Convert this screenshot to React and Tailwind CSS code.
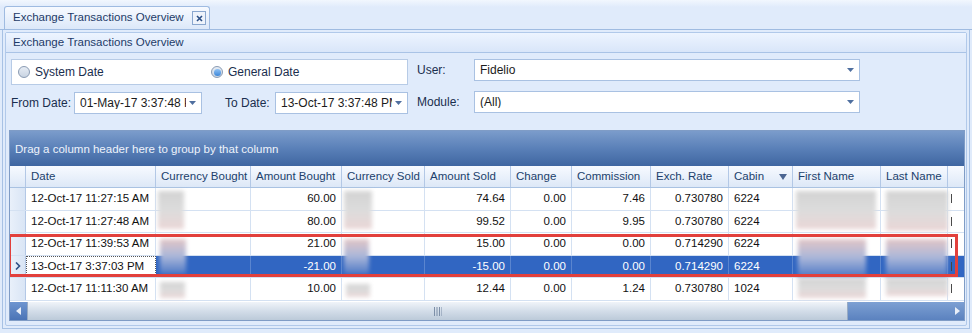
import { useState } from "react";

const columns = [
  { key: "date", label: "Date", w: 130, align: "left" },
  { key: "cb", label: "Currency Bought", w: 95, align: "left" },
  { key: "ab", label: "Amount Bought", w: 91, align: "right" },
  { key: "cs", label: "Currency Sold", w: 83, align: "left" },
  { key: "as", label: "Amount Sold", w: 86, align: "right" },
  { key: "change", label: "Change", w: 61, align: "right" },
  { key: "comm", label: "Commission", w: 79, align: "right" },
  { key: "rate", label: "Exch. Rate", w: 78, align: "right" },
  { key: "cabin", label: "Cabin", w: 64, align: "left", filter: true },
  { key: "first", label: "First Name", w: 88, align: "left" },
  { key: "last", label: "Last Name", w: 67, align: "left" },
  { key: "more", label: "I", w: 40, align: "left" },
];

const rows = [
  { date: "12-Oct-17 11:27:15 AM", ab: "60.00", as: "74.64", change: "0.00", comm: "7.46", rate: "0.730780", cabin: "6224" },
  { date: "12-Oct-17 11:27:48 AM", ab: "80.00", as: "99.52", change: "0.00", comm: "9.95", rate: "0.730780", cabin: "6224" },
  { date: "12-Oct-17 11:39:53 AM", ab: "21.00", as: "15.00", change: "0.00", comm: "0.00", rate: "0.714290", cabin: "6224" },
  { date: "13-Oct-17 3:37:03 PM", ab: "-21.00", as: "-15.00", change: "0.00", comm: "0.00", rate: "0.714290", cabin: "6224" },
  { date: "12-Oct-17 11:11:30 AM", ab: "10.00", as: "12.44", change: "0.00", comm: "1.24", rate: "0.730780", cabin: "1024" },
];

// blurred (redacted) patches over the name / currency cells, relative to grid body
const blurs = [
  { l: 148, t: 3, w: 26, h: 38, blue: false },
  { l: 150, t: 51, w: 26, h: 35, blue: true },
  { l: 150, t: 94, w: 25, h: 16, blue: false },
  { l: 334, t: 3, w: 28, h: 38, blue: false },
  { l: 334, t: 51, w: 25, h: 35, blue: true },
  { l: 336, t: 96, w: 24, h: 13, blue: false },
  { l: 786, t: 3, w: 80, h: 38, blue: false },
  { l: 788, t: 51, w: 68, h: 38, blue: true },
  { l: 788, t: 90, w: 68, h: 20, blue: false },
  { l: 876, t: 3, w: 62, h: 40, blue: false },
  { l: 876, t: 51, w: 61, h: 38, blue: true },
  { l: 876, t: 90, w: 62, h: 18, blue: false },
];

function Arrow() {
  return (
    <svg width="7" height="4" viewBox="0 0 7 4" className="shrink-0">
      <path d="M0 0h7L3.5 4z" fill="#4f6f9f" />
    </svg>
  );
}

function Combo({ value, w }) {
  return (
    <div
      className="h-[22px] bg-white border border-[#a9c1e2] flex items-center pl-[5px] pr-[5px] gap-[3px] overflow-hidden"
      style={{ width: w }}
    >
      <span className="flex-1 min-w-0 whitespace-nowrap overflow-hidden text-[#1b1b1b]">{value}</span>
      <Arrow />
    </div>
  );
}

function Radio({ checked, label }) {
  return (
    <div className="flex items-center gap-[5px]">
      <div className="w-[12px] h-[12px] rounded-full border border-[#8a9bb3] bg-gradient-to-b from-[#e6ecf4] to-[#c9d4e2] flex items-center justify-center">
        {checked && <div className="w-[7px] h-[7px] rounded-full bg-gradient-to-b from-[#8fc2f5] to-[#3a86d8]" />}
      </div>
      <span className="text-[#1a2e4e]">{label}</span>
    </div>
  );
}

export default function App() {
  const [sel] = useState(3);
  return (
    <div
      className="w-[972px] h-[333px] overflow-hidden bg-[#e0ebfb] text-[12px] leading-none"
      style={{ fontFamily: '"Liberation Sans", Arial, sans-serif' }}
    >
      <div className="h-[7px] bg-gradient-to-b from-[#f2f7fe] to-[#e0ebfb]" />
      {/* tab strip */}
      <div className="h-[23px] flex items-end pl-[4px] border-b border-[#9fbbe1]">
        <div className="w-[206px] h-[23px] rounded-t-[3px] border border-b-0 border-[#9fbbe1] bg-gradient-to-b from-[#f7faff] to-[#dce8f9] flex items-center pl-[8px] pr-[3px]">
          <span className="flex-1 text-[11.5px] text-[#1e3b68] whitespace-nowrap">Exchange Transactions Overview</span>
          <div className="w-[14px] h-[14px] border border-[#8aa7cf] bg-[#eef3fb] flex items-center justify-center">
            <svg width="7" height="7" viewBox="0 0 7 7">
              <path d="M1 1l5 5M6 1L1 6" stroke="#2b4f86" strokeWidth="1.6" />
            </svg>
          </div>
        </div>
      </div>
      {/* content panel */}
      <div className="mx-[2px] h-[299px] border-x border-b border-[#a7c1e4] p-[2px] bg-[#e0ebfb]">
        <div className="h-[294px] border border-[#b1c9ea] rounded-[2px] bg-[#e0ebfb] flex flex-col">
          <div className="h-[20px] shrink-0 border-b border-[#a9c3e6] bg-gradient-to-b from-[#edf4ff] to-[#d9e6f9] flex items-center pl-[7px] text-[11.5px] text-[#1e3b68]">
            Exchange Transactions Overview
          </div>
          {/* filters */}
          <div className="flex pl-[5px] pt-[6px] gap-[9px]">
            <div className="flex flex-col gap-[7px] w-[397px]">
              <div className="h-[26px] bg-white border border-[#b7cbe6] flex items-center pl-[6px]">
                <div className="w-[193px]">
                  <Radio label="System Date" />
                </div>
                <Radio checked label="General Date" />
              </div>
              <div className="h-[22px] flex items-center">
                <span className="w-[63px] text-[#1a2e4e]">From Date:</span>
                <Combo value="01-May-17 3:37:48 PM" w={128} />
                <span className="w-[50px] ml-[23px] text-[#1a2e4e]">To Date:</span>
                <Combo value="13-Oct-17 3:37:48 PM" w={133} />
              </div>
            </div>
            <div className="flex flex-col gap-[10px]">
              <div className="h-[22px] flex items-center">
                <span className="w-[57px] text-[#1a2e4e]">User:</span>
                <Combo value="Fidelio" w={386} />
              </div>
              <div className="h-[22px] flex items-center">
                <span className="w-[57px] text-[#1a2e4e]">Module:</span>
                <Combo value="(All)" w={386} />
              </div>
            </div>
          </div>
          {/* grid */}
          <div className="ml-[3px] mr-[1px] mt-[16px] h-[191px] border border-[#7f9cc6] bg-white flex flex-col overflow-hidden">
            <div className="h-[35px] shrink-0 bg-gradient-to-b from-[#7b9ccb] via-[#5a80b8] to-[#3f66a1] flex items-center pl-[5px] pt-[3px] text-[11.5px] text-[#eef3fb]">
              Drag a column header here to group by that column
            </div>
            <div className="h-[22px] shrink-0 flex bg-gradient-to-b from-[#f7faff] to-[#dde8f7] border-b border-[#a9c2e2] text-[11.5px] text-[#213f6c]">
              <div className="w-[16px] shrink-0 border-r border-[#b3c8e6]" />
              {columns.map((c) => (
                <div
                  key={c.key}
                  className="shrink-0 border-r border-[#b3c8e6] flex items-center px-[5px] whitespace-nowrap overflow-hidden"
                  style={{ width: c.w }}
                >
                  <span className="flex-1">{c.key === "more" ? "" : c.label}</span>
                  {c.key === "more" && <span className="w-[1px] h-[10px] bg-[#7b8aa3] ml-[-2px]" />}
                  {c.filter && (
                    <svg width="8" height="8" viewBox="0 0 8 8">
                      <path d="M0 1h8L4 7z" fill="#4b6592" />
                    </svg>
                  )}
                </div>
              ))}
            </div>
            <div className="relative flex-1 flex flex-col">
              {rows.map((r, i) => {
                const isSel = i === sel;
                return (
                  <div key={i} className="h-[22.5px] shrink-0 flex border-b border-[#d4e1f2] text-[11.5px]">
                    <div className="w-[16px] shrink-0 border-r border-[#b3c8e6] bg-gradient-to-r from-[#e9f0fa] to-[#d9e5f5] flex items-center justify-center">
                      {isSel && (
                        <svg width="6" height="8" viewBox="0 0 6 8">
                          <path d="M1 0.5L4.5 4L1 7.5" stroke="#2d4f86" strokeWidth="1.6" fill="none" />
                        </svg>
                      )}
                    </div>
                    {columns.map((c, ci) => {
                      const dateFocus = isSel && ci === 0;
                      return (
                        <div
                          key={c.key}
                          className={
                            "shrink-0 flex items-center whitespace-nowrap overflow-hidden " +
                            (dateFocus
                              ? "bg-white text-[#111] border border-dotted border-[#555] px-[4px]"
                              : isSel
                              ? "bg-[#3166c2] text-white border-r border-[#5a85cf] px-[5px]"
                              : "bg-white text-[#111] border-r border-[#d4e1f2] px-[5px]") +
                            (c.align === "right" ? " justify-end" : "")
                          }
                          style={{ width: c.w }}
                        >
                          {c.key === "more" ? (
                            <span className="w-[1px] h-[9px] bg-[#444] ml-[-2px]" />
                          ) : (
                            r[c.key] || ""
                          )}
                        </div>
                      );
                    })}
                  </div>
                );
              })}
              {blurs.map((b, i) => (
                <div
                  key={i}
                  className={
                    "absolute blur-[2px] " +
                    (b.blue
                      ? "bg-gradient-to-b from-[#e2c6c6] via-[#a9b6d9] to-[#4f78c4]"
                      : "bg-gradient-to-b from-[#d3d3d3] via-[#dcdcdc] to-[#ead6d6]")
                  }
                  style={{ left: b.l, top: b.t, width: b.w, height: b.h }}
                />
              ))}
              {/* highlight box */}
              <div className="absolute left-[-2px] top-[46px] w-[950px] h-[43px] border-[3px] border-[#e2403c]" />
              {/* horizontal scrollbar */}
              <div className="mt-auto h-[18px] shrink-0 flex bg-[#6f93c9]">
                <div className="w-[17px] bg-gradient-to-b from-[#6e95d0] to-[#4b74b6] flex items-center justify-center">
                  <svg width="5" height="8" viewBox="0 0 5 8">
                    <path d="M5 0v8L0 4z" fill="#e8eef8" />
                  </svg>
                </div>
                <div className="w-[821px] bg-gradient-to-b from-[#f0f4f9] via-[#d3dde9] to-[#bccad9] border-x border-[#98abc4] flex items-center justify-center">
                  <svg width="8" height="9" viewBox="0 0 8 9">
                    <path d="M0.5 0v9M3 0v9M5.5 0v9M8 0v9" stroke="#7d8fa8" strokeWidth="1" />
                  </svg>
                </div>
                <div className="flex-1 bg-gradient-to-b from-[#7da0d3] to-[#5b82bf] flex items-center justify-end pr-[4px]">
                  <svg width="5" height="8" viewBox="0 0 5 8">
                    <path d="M0 0v8L5 4z" fill="#e8eef8" />
                  </svg>
                </div>
              </div>
            </div>
          </div>
        </div>
      </div>
    </div>
  );
}
